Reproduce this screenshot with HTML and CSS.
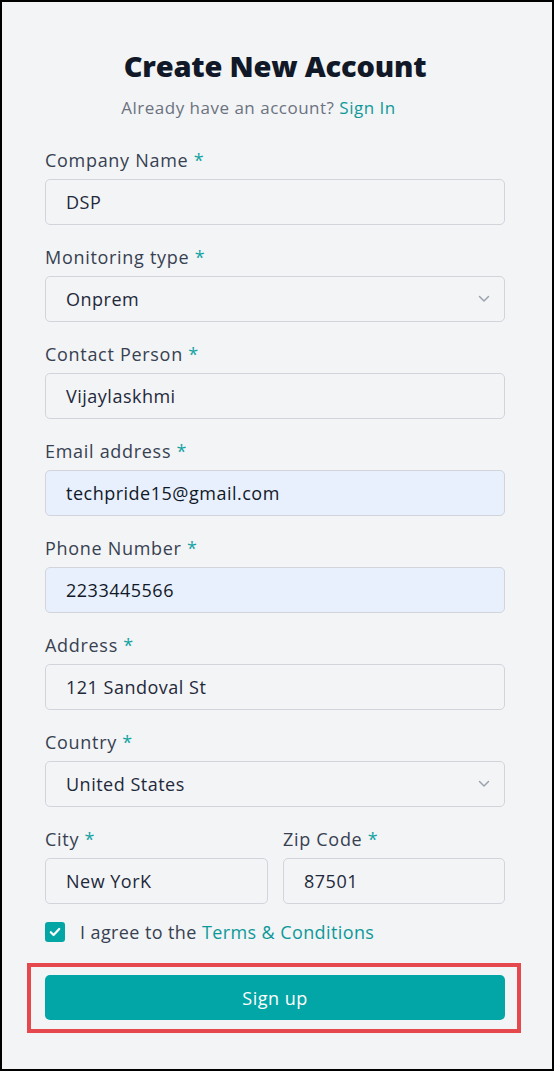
FILE: index.html
```html
<!DOCTYPE html>
<html>
<head>
<meta charset="utf-8">
<link rel="stylesheet" href="styles.css">
</head>
<body>
<div class="frame">
  <h1 class="title">Create New Account</h1>
  <p class="subtitle">Already have an account? <a class="link" href="#">Sign In</a></p>
  <form class="form">
    <div class="group">
      <label class="label">Company Name <span class="req">*</span></label>
      <div class="field">DSP</div>
    </div>
    <div class="group">
      <label class="label">Monitoring type <span class="req">*</span></label>
      <div class="field select">Onprem
        <svg class="chev" width="12" height="8" viewBox="0 0 12 8"><path d="M1.5 1.5 L6 6 L10.5 1.5" fill="none" stroke="#9ca3af" stroke-width="1.5" stroke-linecap="round" stroke-linejoin="round"/></svg>
      </div>
    </div>
    <div class="group">
      <label class="label">Contact Person <span class="req">*</span></label>
      <div class="field">Vijaylaskhmi</div>
    </div>
    <div class="group">
      <label class="label">Email address <span class="req">*</span></label>
      <div class="field filled">techpride15@gmail.com</div>
    </div>
    <div class="group">
      <label class="label">Phone Number <span class="req">*</span></label>
      <div class="field filled">2233445566</div>
    </div>
    <div class="group">
      <label class="label">Address <span class="req">*</span></label>
      <div class="field">121 Sandoval St</div>
    </div>
    <div class="group">
      <label class="label">Country <span class="req">*</span></label>
      <div class="field select">United States
        <svg class="chev" width="12" height="8" viewBox="0 0 12 8"><path d="M1.5 1.5 L6 6 L10.5 1.5" fill="none" stroke="#9ca3af" stroke-width="1.5" stroke-linecap="round" stroke-linejoin="round"/></svg>
      </div>
    </div>
    <div class="row">
      <div class="group">
        <label class="label">City <span class="req">*</span></label>
        <div class="field">New YorK</div>
      </div>
      <div class="group">
        <label class="label">Zip Code <span class="req">*</span></label>
        <div class="field">87501</div>
      </div>
    </div>
    <div class="agree">
      <span class="check"><svg width="12" height="10" viewBox="0 0 12 10"><path d="M1.8 5.2 L4.6 8 L10.2 2" fill="none" stroke="#fff" stroke-width="2.2" stroke-linecap="round" stroke-linejoin="round"/></svg></span>
      <span class="agree-text">I agree to the <a class="link" href="#">Terms &amp; Conditions</a></span>
    </div>
    <div class="highlight">
      <button type="button" class="btn">Sign up</button>
    </div>
  </form>
</div>
</body>
</html>
```
FILE: styles.css
```css
* { box-sizing: border-box; }
html, body { margin: 0; padding: 0; background: #ffffff; }
body { font-family: "Open Sans", "Liberation Sans", sans-serif; }
.frame {
  width: 554px;
  height: 1071px;
  border: 2px solid #000;
  background: #f3f4f6;
  padding: 44px 0 0 43px;
}
.title {
  width: 460px;
  margin: 0;
  font-size: 29px;
  line-height: 40px;
  font-weight: 800;
  color: #111827;
  text-align: center;
  letter-spacing: -0.2px;
}
.subtitle {
  width: 460px;
  margin: 10px 0 0;
  padding-right: 33px;
  font-size: 17px;
  line-height: 24px;
  color: #6b7280;
  text-align: center;
  letter-spacing: 0.5px;
}
.link { color: #0e9999; text-decoration: none; font-weight: 500; }
.form { width: 460px; margin-top: 28px; display: flex; flex-direction: column; }
.group { display: flex; flex-direction: column; margin-bottom: 20px; }
.label {
  font-size: 18px;
  line-height: 24px;
  color: #374151;
  margin-bottom: 7px;
  letter-spacing: 0.7px;
}
.req { color: #14a3a3; }
.field {
  height: 46px;
  border: 1px solid #d1d5db;
  border-radius: 5px;
  padding: 0 20px;
  display: flex;
  align-items: center;
  font-size: 18px;
  letter-spacing: 0.5px;
  color: #1e293b;
  background: #f3f4f6;
}
.field.filled { background: #e8f0fe; color: #111827; }
.select { justify-content: space-between; }
.chev { margin-right: -6px; }
.row { display: grid; grid-template-columns: 223px 222px; column-gap: 15px; }
.row .group { margin-bottom: 0; }
.agree {
  display: flex;
  align-items: center;
  height: 24px;
  margin-top: 16px;
}
.check {
  width: 20px; height: 20px;
  border-radius: 3px;
  background: #04a5a5;
  display: flex; align-items: center; justify-content: center;
  margin-right: 15px;
}
.agree-text { font-size: 18px; color: #374151; line-height: 24px; letter-spacing: 0.4px; }
.agree-text .link { font-weight: 500; }
.highlight {
  margin: 19px -16px 0 -18px;
  border: 4px solid #e5484d;
  padding: 8px 12px 9px 14px;
}
.btn {
  display: block;
  width: 460px;
  height: 45px;
  border: 0;
  border-radius: 5px;
  background: #03a6a6;
  color: #fff;
  font-family: inherit;
  font-size: 18px;
  letter-spacing: 0.5px;
  font-weight: 500;
}
```
